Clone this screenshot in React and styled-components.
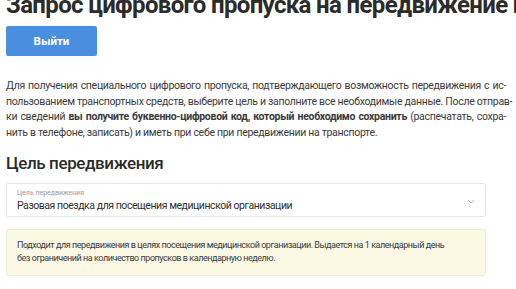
import styled, { createGlobalStyle } from "styled-components";

const GlobalStyle = createGlobalStyle`
  body {
    margin: 0;
    background: #fff;
    font-family: Roboto, "Liberation Sans", sans-serif;
    color: #333;
  }
`;

const Page = styled.div`
  padding: 0 0 0 6px;
  width: 516px;
  box-sizing: border-box;
  overflow: hidden;
`;

const Title = styled.h1`
  margin: -9px 0 0;
  font-size: 24px;
  line-height: 28px;
  font-weight: 700;
  letter-spacing: -0.65px;
  color: #2b2b2b;
  white-space: nowrap;
`;

const Button = styled.button`
  display: block;
  margin-top: 7px;
  width: 91px;
  height: 30px;
  border: none;
  border-radius: 2px;
  background: #4a8fdf;
  color: #fff;
  font-family: inherit;
  font-size: 11.5px;
  font-weight: 700;
`;

const Text = styled.div`
  margin-top: 22px;
  width: 500px;
  font-size: 10.5px;
  line-height: 15.7px;
  letter-spacing: -0.3px;
  color: #3a3a3a;
`;

const Line = styled.div`
  text-align: justify;
  text-align-last: ${(p) => (p.last ? "left" : "justify")};
  white-space: nowrap;
`;

const SectionTitle = styled.h2`
  margin: 12px 0 0;
  font-size: 17px;
  line-height: 20px;
  font-weight: 500;
  letter-spacing: -0.4px;
  color: #2b2b2b;
`;

const Select = styled.div`
  margin-top: 10px;
  width: 480px;
  height: 34px;
  box-sizing: border-box;
  border: 1px solid #e6e6e6;
  border-radius: 2px;
  padding: 3px 10px 0 10px;
  display: flex;
  align-items: center;
  justify-content: space-between;
`;

const SelectLabel = styled.div`
  font-size: 7px;
  line-height: 10px;
  color: #9a9a9a;
`;

const SelectValue = styled.div`
  font-size: 10.5px;
  line-height: 16px;
  letter-spacing: -0.45px;
  color: #2f2f2f;
`;

const Note = styled.div`
  margin-top: 12px;
  width: 480px;
  box-sizing: border-box;
  background: #fbf8e4;
  border: 1px solid #eeebd8;
  border-radius: 2px;
  padding: 9px 10px;
  font-size: 9px;
  line-height: 13.5px;
  letter-spacing: -0.45px;
  color: #3a3a3a;
  white-space: nowrap;
`;

export default function App() {
  return (
    <>
      <GlobalStyle />
      <Page>
        <Title>Запрос цифрового пропуска на передвижение по</Title>
        <Button>Выйти</Button>
        <Text>
          <Line>Для получения специального цифрового пропуска, подтверждающего возможность передвижения с ис-</Line>
          <Line>пользованием транспортных средств, выберите цель и заполните все необходимые данные. После отправ-</Line>
          <Line>
            ки сведений <b>вы получите буквенно-цифровой код, который необходимо сохранить</b> (распечатать, сохра-
          </Line>
          <Line last>нить в телефоне, записать) и иметь при себе при передвижении на транспорте.</Line>
        </Text>
        <SectionTitle>Цель передвижения</SectionTitle>
        <Select>
          <div>
            <SelectLabel>Цель передвижения</SelectLabel>
            <SelectValue>Разовая поездка для посещения медицинской организации</SelectValue>
          </div>
          <svg width="8" height="5" viewBox="0 0 8 5">
            <path d="M1 1l3 3 3-3" fill="none" stroke="#b5b5b5" strokeWidth="1" />
          </svg>
        </Select>
        <Note>
          Подходит для передвижения в целях посещения медицинской организации. Выдается на 1 календарный день
          <br />
          без ограничений на количество пропусков в календарную неделю.
        </Note>
      </Page>
    </>
  );
}
